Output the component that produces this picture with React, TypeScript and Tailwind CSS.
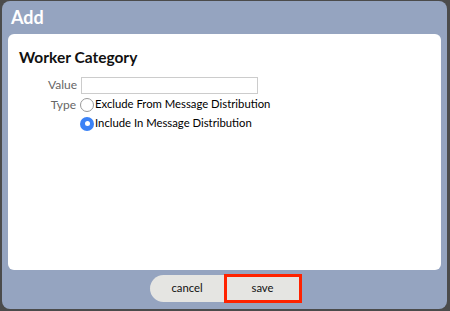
import React from "react";

export default function App() {
  return (
    <div
      className="w-[450px] h-[311px] bg-[#4b4b4b] pt-px pl-[2px] pr-[3px] pb-[2px]"
      style={{ fontFamily: "Lato, 'Open Sans', sans-serif" }}
    >
      <div className="w-full h-full bg-[#95a4c0] rounded-[8px] flex flex-col">
        <div className="h-[33px] flex items-center pl-[9px] text-white text-[18px] font-bold">
          Add
        </div>
        <div className="mx-[6px] h-[236px] bg-white rounded-[6px] pt-[13px] pl-[11px]">
          <div className="text-[15.5px] font-bold text-[#111] leading-[20px]">Worker Category</div>
          <div className="mt-[9px] flex flex-col gap-[2px] text-[11.3px] text-[#000]">
            <div className="flex items-center">
              <div className="w-[62px] text-right pr-[4px] text-[12px] text-[#666]">Value</div>
              <div className="w-[177px] h-[17px] border border-[#ccc] bg-white" />
            </div>
            <div className="flex items-center h-[17px]">
              <div className="w-[61px] text-right pr-[4px] text-[12px] text-[#666]">Type</div>
              <div className="w-[14px] h-[14px] rounded-full border border-[#999] bg-white mr-[1px]" />
              <span>Exclude From Message Distribution</span>
            </div>
            <div className="flex items-center h-[17px]">
              <div className="w-[61px]" />
              <div className="w-[14px] h-[14px] rounded-full bg-[#3b82f6] mr-[1px] flex items-center justify-center">
                <div className="w-[5px] h-[5px] rounded-full bg-white" />
              </div>
              <span>Include In Message Distribution</span>
            </div>
          </div>
        </div>
        <div className="flex-1 flex items-center justify-center pl-[2px] pb-[2px]">
          <div className="flex items-center">
            <button className="w-[75px] h-[27px] bg-[#e5e5e2] rounded-l-full text-[11.3px] text-[#111]">
              cancel
            </button>
            <button className="w-[78px] h-[29px] bg-[#e5e5e2] border-[3px] border-[#ff2200] text-[11.3px] text-[#111] -ml-px">
              save
            </button>
          </div>
        </div>
      </div>
    </div>
  );
}
